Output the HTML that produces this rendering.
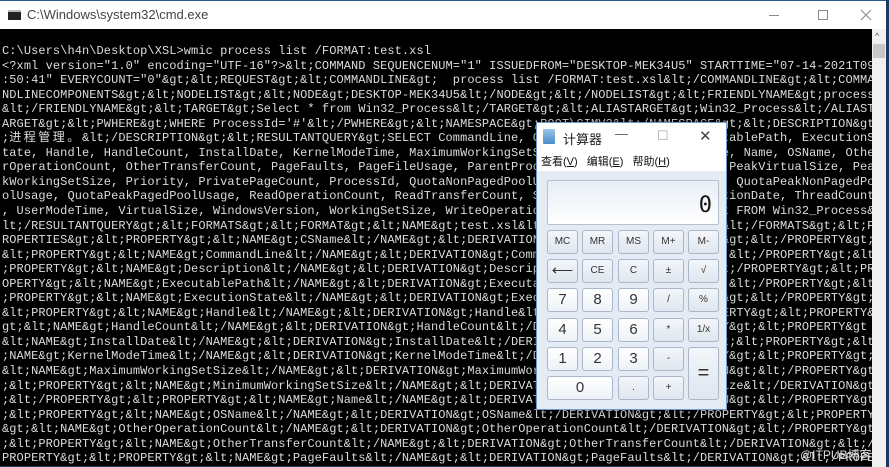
<!DOCTYPE html>
<html><head><meta charset="utf-8"><style>
*{margin:0;padding:0;box-sizing:border-box}
body{width:889px;height:466px;overflow:hidden;background:#1b3a5c;position:relative;font-family:"Liberation Sans","Noto Sans CJK SC",sans-serif}
#win{position:absolute;left:0;top:0;width:886px;height:466px;background:#000;border-top:1px solid #2a5a8a}
#title{position:absolute;left:0;top:0;width:886px;height:28px;background:#fff}
#title .t{position:absolute;left:27px;top:6px;font-size:13px;color:#444}
#title .ic{position:absolute;left:8px;top:9px;width:13px;height:10px;background:#222;border-top:2px solid #bbb}
.ctl{position:absolute;background:#888}
pre{position:absolute;left:2px;top:43px;width:870px;overflow:hidden;font-family:"Liberation Mono","Noto Sans CJK SC",monospace;font-size:12px;letter-spacing:0.07px;line-height:14.55px;color:#dcdcdc;white-space:pre}
pre .cj{display:inline-block;width:72.7px;letter-spacing:2.5px}
#sb{position:absolute;left:872px;top:28px;width:14px;height:438px;background:#f0f0f0}
#sb .th{position:absolute;left:1px;top:15px;width:12px;height:14px;background:#c8c8c8}
#calc{position:absolute;left:536px;top:122px;width:191px;height:288px;background:#e4ebf4;border:1px solid #6a9ad0;box-shadow:0 0 6px rgba(0,0,0,.5)}
#calc .tb{height:28px;background:#fff;position:relative}
#calc .tb span{position:absolute;font-size:13px;color:#222}
#calc .menu{height:20px;background:#fff;font-size:11px;color:#111;padding:2px 4px;word-spacing:6px}
#disp{position:absolute;left:10px;top:57px;width:172px;height:45px;background:linear-gradient(#e8eef6,#fff);border:1px solid #b6c2d2;border-radius:2px;text-align:right;font-size:22px;padding:12px 6px 0 0;font-family:"DejaVu Sans Mono",monospace;color:#111}
.b{position:absolute;width:31px;height:24px;border:1px solid #a9b7c9;border-radius:3px;background:linear-gradient(#f3f6fa,#dfe6ef);font-size:10px;color:#333;text-align:center;line-height:22px}
.n{font-size:15px;background:linear-gradient(#fff,#eef2f7)}
#wm{position:absolute;left:800px;top:446px;font-size:12px;color:#ddd}
</style></head><body>
<div id="win">
<div id="title"><div class="ic"></div><span class="t">C:\Windows\system32\cmd.exe</span>
<div class="ctl" style="left:769px;top:14px;width:10px;height:1px"></div>
<div style="position:absolute;left:818px;top:9px;width:10px;height:10px;border:1px solid #888"></div>
<svg style="position:absolute;left:860px;top:8px" width="12" height="12"><path d="M1 1L11 11M11 1L1 11" stroke="#888" stroke-width="1"/></svg></div>
<pre>C:\Users\h4n\Desktop\XSL&gt;wmic process list /FORMAT:test.xsl
&lt;?xml version="1.0" encoding="UTF-16"?&gt;&amp;lt;COMMAND SEQUENCENUM="1" ISSUEDFROM="DESKTOP-MEK34U5" STARTTIME="07-14-2021T09
:50:41" EVERYCOUNT="0"&amp;gt;&amp;lt;REQUEST&amp;gt;&amp;lt;COMMANDLINE&amp;gt;  process list /FORMAT:test.xsl&amp;lt;/COMMANDLINE&amp;gt;&amp;lt;COMMA
NDLINECOMPONENTS&amp;gt;&amp;lt;NODELIST&amp;gt;&amp;lt;NODE&amp;gt;DESKTOP-MEK34U5&amp;lt;/NODE&amp;gt;&amp;lt;/NODELIST&amp;gt;&amp;lt;FRIENDLYNAME&amp;gt;process
&amp;lt;/FRIENDLYNAME&amp;gt;&amp;lt;TARGET&amp;gt;Select * from Win32_Process&amp;lt;/TARGET&amp;gt;&amp;lt;ALIASTARGET&amp;gt;Win32_Process&amp;lt;/ALIAST
ARGET&amp;gt;&amp;lt;PWHERE&amp;gt;WHERE ProcessId='#'&amp;lt;/PWHERE&amp;gt;&amp;lt;NAMESPACE&amp;gt;ROOT\CIMV2&amp;lt;/NAMESPACE&amp;gt;&amp;lt;DESCRIPTION&amp;gt
;<span class="cj">进程管理。</span>&amp;lt;/DESCRIPTION&amp;gt;&amp;lt;RESULTANTQUERY&amp;gt;SELECT CommandLine, CSName, Description, ExecutablePath, ExecutionS
tate, Handle, HandleCount, InstallDate, KernelModeTime, MaximumWorkingSetSize, MinimumWorkingSetSize, Name, OSName, Othe
rOperationCount, OtherTransferCount, PageFaults, PageFileUsage, ParentProcessId, PeakPageFileUsage, PeakVirtualSize, Pea
kWorkingSetSize, Priority, PrivatePageCount, ProcessId, QuotaNonPagedPoolUsage, QuotaPagedPoolUsage, QuotaPeakNonPagedPo
olUsage, QuotaPeakPagedPoolUsage, ReadOperationCount, ReadTransferCount, SessionId, Status, TerminationDate, ThreadCount
, UserModeTime, VirtualSize, WindowsVersion, WorkingSetSize, WriteOperationCount, WriteTransferCount FROM Win32_Process&amp;
lt;/RESULTANTQUERY&amp;gt;&amp;lt;FORMATS&amp;gt;&amp;lt;FORMAT&amp;gt;&amp;lt;NAME&amp;gt;test.xsl&amp;lt;/NAME&amp;gt;&amp;lt;/FORMAT&amp;gt;&amp;lt;/FORMATS&amp;gt;&amp;lt;P
ROPERTIES&amp;gt;&amp;lt;PROPERTY&amp;gt;&amp;lt;NAME&amp;gt;CSName&amp;lt;/NAME&amp;gt;&amp;lt;DERIVATION&amp;gt;CSName&amp;lt;/DERIVATION&amp;gt;&amp;lt;/PROPERTY&amp;gt;
&amp;lt;PROPERTY&amp;gt;&amp;lt;NAME&amp;gt;CommandLine&amp;lt;/NAME&amp;gt;&amp;lt;DERIVATION&amp;gt;CommandLine&amp;lt;/DERIVATION&amp;gt;&amp;lt;/PROPERTY&amp;gt;&amp;lt
;PROPERTY&amp;gt;&amp;lt;NAME&amp;gt;Description&amp;lt;/NAME&amp;gt;&amp;lt;DERIVATION&amp;gt;Description&amp;lt;/DERIVATION&amp;gt;&amp;lt;/PROPERTY&amp;gt;&amp;lt;PR
OPERTY&amp;gt;&amp;lt;NAME&amp;gt;ExecutablePath&amp;lt;/NAME&amp;gt;&amp;lt;DERIVATION&amp;gt;ExecutablePath&amp;lt;/DERIVATION&amp;gt;&amp;lt;/PROPERTY&amp;gt;&amp;lt
;PROPERTY&amp;gt;&amp;lt;NAME&amp;gt;ExecutionState&amp;lt;/NAME&amp;gt;&amp;lt;DERIVATION&amp;gt;ExecutionState&amp;lt;/DERIVATION&amp;gt;&amp;lt;/PROPERTY&amp;gt;
&amp;lt;PROPERTY&amp;gt;&amp;lt;NAME&amp;gt;Handle&amp;lt;/NAME&amp;gt;&amp;lt;DERIVATION&amp;gt;Handle&amp;lt;/DERIVATION&amp;gt;&amp;lt;/PROPERTY&amp;gt;&amp;lt;PROPERTY&amp;
gt;&amp;lt;NAME&amp;gt;HandleCount&amp;lt;/NAME&amp;gt;&amp;lt;DERIVATION&amp;gt;HandleCount&amp;lt;/DERIVATION&amp;gt;&amp;lt;/PROPERTY&amp;gt;&amp;lt;PROPERTY&amp;gt
&amp;lt;NAME&amp;gt;InstallDate&amp;lt;/NAME&amp;gt;&amp;lt;DERIVATION&amp;gt;InstallDate&amp;lt;/DERIVATION&amp;gt;&amp;lt;/PROPERTY&amp;gt;&amp;lt;PROPERTY&amp;gt;&amp;lt
;NAME&amp;gt;KernelModeTime&amp;lt;/NAME&amp;gt;&amp;lt;DERIVATION&amp;gt;KernelModeTime&amp;lt;/DERIVATION&amp;gt;&amp;lt;/PROPERTY&amp;gt;&amp;lt;PROPERTY&amp;gt;
&amp;lt;NAME&amp;gt;MaximumWorkingSetSize&amp;lt;/NAME&amp;gt;&amp;lt;DERIVATION&amp;gt;MaximumWorkingSetSize&amp;lt;/DERIVATION&amp;gt;&amp;lt;/PROPERTY&amp;gt
;&amp;lt;PROPERTY&amp;gt;&amp;lt;NAME&amp;gt;MinimumWorkingSetSize&amp;lt;/NAME&amp;gt;&amp;lt;DERIVATION&amp;gt;MinimumWorkingSetSize&amp;lt;/DERIVATION&amp;gt
;&amp;lt;/PROPERTY&amp;gt;&amp;lt;PROPERTY&amp;gt;&amp;lt;NAME&amp;gt;Name&amp;lt;/NAME&amp;gt;&amp;lt;DERIVATION&amp;gt;Name&amp;lt;/DERIVATION&amp;gt;&amp;lt;/PROPERTY&amp;gt
;&amp;lt;PROPERTY&amp;gt;&amp;lt;NAME&amp;gt;OSName&amp;lt;/NAME&amp;gt;&amp;lt;DERIVATION&amp;gt;OSName&amp;lt;/DERIVATION&amp;gt;&amp;lt;/PROPERTY&amp;gt;&amp;lt;PROPERTY
&amp;gt;&amp;lt;NAME&amp;gt;OtherOperationCount&amp;lt;/NAME&amp;gt;&amp;lt;DERIVATION&amp;gt;OtherOperationCount&amp;lt;/DERIVATION&amp;gt;&amp;lt;/PROPERTY&amp;gt
;&amp;lt;PROPERTY&amp;gt;&amp;lt;NAME&amp;gt;OtherTransferCount&amp;lt;/NAME&amp;gt;&amp;lt;DERIVATION&amp;gt;OtherTransferCount&amp;lt;/DERIVATION&amp;gt;&amp;lt;/
PROPERTY&amp;gt;&amp;lt;PROPERTY&amp;gt;&amp;lt;NAME&amp;gt;PageFaults&amp;lt;/NAME&amp;gt;&amp;lt;DERIVATION&amp;gt;PageFaults&amp;lt;/DERIVATION&amp;gt;&amp;lt;/PROPE</pre>
<div id="sb"><span style="position:absolute;left:3px;top:2px;font-size:9px;color:#555">^</span><div class="th"></div></div>
</div>
<div id="calc">
<div class="tb"><span style="left:6px;top:6px;width:12px;height:15px;background:linear-gradient(#9cc4e8,#4a8cc8);border-radius:1px"></span><span style="left:26px;top:6px">计算器</span><span style="left:78px;top:3px;color:#555">—</span><span style="left:120px;top:5px;color:#aaa">☐</span><span style="left:162px;top:4px;font-size:15px;color:#444">✕</span></div>
<div class="menu">查看(<u>V</u>) 编辑(<u>E</u>) 帮助(<u>H</u>)</div>
<div id="disp">0</div>
<div class="b" style="left:10px;top:107px">MC</div><div class="b" style="left:45px;top:107px">MR</div><div class="b" style="left:81px;top:107px">MS</div><div class="b" style="left:116px;top:107px">M+</div><div class="b" style="left:151px;top:107px">M-</div>
<div class="b" style="left:10px;top:136px;font-size:15px">⟵</div><div class="b" style="left:45px;top:136px">CE</div><div class="b" style="left:81px;top:136px">C</div><div class="b" style="left:116px;top:136px">±</div><div class="b" style="left:151px;top:136px">√</div>
<div class="b n" style="left:10px;top:165px">7</div><div class="b n" style="left:45px;top:165px">8</div><div class="b n" style="left:81px;top:165px">9</div><div class="b" style="left:116px;top:165px">/</div><div class="b" style="left:151px;top:165px">%</div>
<div class="b n" style="left:10px;top:195px">4</div><div class="b n" style="left:45px;top:195px">5</div><div class="b n" style="left:81px;top:195px">6</div><div class="b" style="left:116px;top:195px">*</div><div class="b" style="left:151px;top:195px">1/x</div>
<div class="b n" style="left:10px;top:224px">1</div><div class="b n" style="left:45px;top:224px">2</div><div class="b n" style="left:81px;top:224px">3</div><div class="b" style="left:116px;top:224px">-</div><div class="b" style="left:151px;top:224px;height:53px;line-height:51px;font-size:20px">=</div>
<div class="b n" style="left:10px;top:253px;width:66px">0</div><div class="b" style="left:81px;top:253px">.</div><div class="b" style="left:116px;top:253px">+</div>
</div>
<div id="wm">@ITPUB博客</div>
</body></html>
